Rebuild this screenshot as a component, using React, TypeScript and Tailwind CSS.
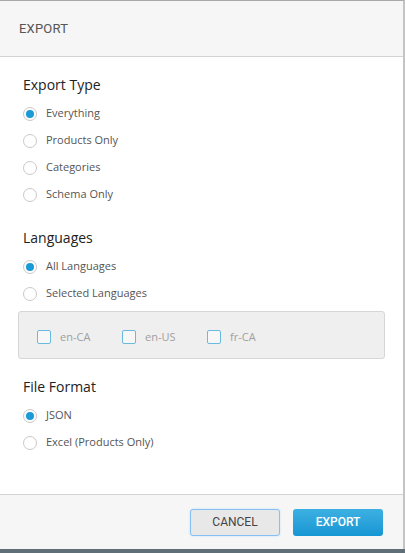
import { useState } from "react";

type Opt = { id: string; label: string };

const exportTypes: Opt[] = [
  { id: "everything", label: "Everything" },
  { id: "products", label: "Products Only" },
  { id: "categories", label: "Categories" },
  { id: "schema", label: "Schema Only" },
];

const languageModes: Opt[] = [
  { id: "all", label: "All Languages" },
  { id: "selected", label: "Selected Languages" },
];

const formats: Opt[] = [
  { id: "json", label: "JSON" },
  { id: "excel", label: "Excel (Products Only)" },
];

const Radio = ({ checked, label, onClick }: { checked: boolean; label: string; onClick: () => void }) => (
  <button type="button" onClick={onClick} className="flex h-[27px] items-center gap-[9px] text-left">
    <span className="flex h-[14px] w-[14px] items-center justify-center rounded-full border border-[#c9c9c9] bg-white">
      {checked && <span className="h-[8px] w-[8px] rounded-full bg-[#1a9ad6]" />}
    </span>
    <span className="text-[11px] text-[#555]">{label}</span>
  </button>
);

const Section = ({ title, children }: { title: string; children: React.ReactNode }) => (
  <div>
    <h3 className="mb-[5px] text-[14px] leading-[20px] text-[#222]">{title}</h3>
    {children}
  </div>
);

export default function App() {
  const [type, setType] = useState("everything");
  const [lang, setLang] = useState("all");
  const [format, setFormat] = useState("json");
  const [picked, setPicked] = useState<string[]>([]);

  const toggle = (code: string) =>
    setPicked((p) => (p.includes(code) ? p.filter((c) => c !== code) : [...p, code]));

  return (
    <div className="flex h-[553px] w-[405px] flex-col bg-[#5f6e77]" style={{ fontFamily: '"Open Sans", sans-serif' }}>
      <div className="flex h-[549px] w-[405px] flex-col border-t border-r-2 border-t-[#a9a9a9] border-r-[#c4c4c4] bg-white">
        <div className="flex h-[56px] items-center border-b border-[#d3d3d3] bg-[#f6f6f6] px-[19px]">
          <span className="text-[13px] tracking-[0.2px] text-[#555]" style={{ fontFamily: "Roboto, sans-serif" }}>
            EXPORT
          </span>
        </div>

        <div className="flex flex-1 flex-col gap-[18px] px-[23px] pt-[18px]">
          <Section title="Export Type">
            {exportTypes.map((o) => (
              <Radio key={o.id} checked={type === o.id} label={o.label} onClick={() => setType(o.id)} />
            ))}
          </Section>

          <div className="mt-[2px]">
            <Section title="Languages">
              {languageModes.map((o) => (
                <Radio key={o.id} checked={lang === o.id} label={o.label} onClick={() => setLang(o.id)} />
              ))}
              <div className="-mx-[5px] mt-[4px] flex h-[48px] items-center rounded-[3px] border border-[#d6d6d6] bg-[#efefef] px-[18px] pt-[4px]">
                {["en-CA", "en-US", "fr-CA"].map((c) => (
                  <button
                    key={c}
                    type="button"
                    onClick={() => toggle(c)}
                    className="flex w-[85px] items-center gap-[9px]"
                  >
                    <span className="flex h-[14px] w-[14px] items-center justify-center rounded-[2px] border border-[#6ab9de] bg-[#f7f7f7]">
                      {picked.includes(c) && <span className="h-[6px] w-[6px] bg-[#1a9ad6]" />}
                    </span>
                    <span className="text-[11px] text-[#a0a0a0]">{c}</span>
                  </button>
                ))}
              </div>
            </Section>
          </div>

          <Section title="File Format">
            {formats.map((o) => (
              <Radio key={o.id} checked={format === o.id} label={o.label} onClick={() => setFormat(o.id)} />
            ))}
          </Section>
        </div>

        <div className="flex h-[55px] items-center justify-end gap-[13px] border-t border-[#d3d3d3] bg-[#f6f6f6] pr-[20px]">
          <button
            type="button"
            className="h-[27px] w-[90px] rounded-[3px] border border-[#86bff2] bg-[#e8e8e8] text-[12px] text-[#444] shadow-[0_0_2px_#b9dbfa]"
            style={{ fontFamily: "Roboto, sans-serif" }}
          >
            CANCEL
          </button>
          <button
            type="button"
            className="h-[27px] w-[90px] rounded-[3px] bg-gradient-to-b from-[#3cb0e2] to-[#1496d3] text-[12px] font-medium text-white"
            style={{ fontFamily: "Roboto, sans-serif" }}
          >
            EXPORT
          </button>
        </div>
      </div>
    </div>
  );
}
